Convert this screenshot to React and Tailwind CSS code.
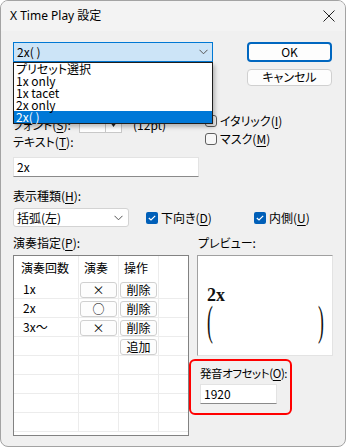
import React from 'react';

const jp = "[font-family:'Noto_Sans_CJK_JP','Noto_Sans',sans-serif]";

function U({ children }) {
    return <span className="underline underline-offset-[2px] decoration-[1px]">{children}</span>;
}

function Chevron() {
    return (
        <svg width="9" height="6" viewBox="0 0 9 6" className="shrink-0">
            <path d="M0.5 0.8 L4.5 4.8 L8.5 0.8" fill="none" stroke="#555" strokeWidth="1" />
        </svg>
    );
}

function Check({ checked, label }) {
    return (
        <div className="flex items-center h-[18px]">
            {checked ? (
                <div className="w-[12px] h-[12px] rounded-[2px] bg-[#005fb8] flex items-center justify-center">
                    <svg width="8" height="6" viewBox="0 0 8 6">
                        <path d="M0.8 3 L3 5 L7.2 0.8" fill="none" stroke="white" strokeWidth="1.2" />
                    </svg>
                </div>
            ) : (
                <div className="w-[12px] h-[12px] rounded-[3px] border border-[#5f5f5f] bg-[#f7f7f7]" />
            )}
            <span className="ml-[3px] leading-[14px] whitespace-nowrap">{label}</span>
        </div>
    );
}

function SmallBtn({ children }) {
    return (
        <div className="w-[37px] h-[16px] border border-[#d0d0d0] rounded-[3px] bg-[#fdfdfd] flex items-center justify-center leading-[14px]">
            {children}
        </div>
    );
}

const rows = [
    { n: '1x', play: '×' },
    { n: '2x', play: '○' },
    { n: '3x〜', play: '×' },
    { add: true },
    {}, {}, {}, {},
];

export default function App() {
    return (
        <div className={`w-[347px] h-[448px] bg-white text-[12px] text-black ${jp} [font-feature-settings:'palt']`}>
            <div className="w-[346px] h-[447px] border border-[#a3a3a3] rounded-[8px] bg-[#f0f0f0] overflow-hidden flex flex-col">
                {/* title bar */}
                <div className="h-[30px] shrink-0 bg-[#f3f3f3] flex items-center pl-[9px] pr-[10px]">
                    <span className="flex-1 [font-family:'Noto_Sans','Noto_Sans_CJK_JP',sans-serif] text-[12px] leading-[14px]">X Time Play 設定</span>
                    <svg width="12" height="12" viewBox="0 0 12 12">
                        <path d="M0.5 0.5 L11.5 11.5 M11.5 0.5 L0.5 11.5" stroke="#222" strokeWidth="1" />
                    </svg>
                </div>

                <div className="flex-1 pl-[12px] pt-[11px]">
                    {/* preset combo + buttons */}
                    <div className="flex h-[44px]">
                        <div className="relative w-[200px] h-[20px]">
                            <div className="h-full border border-[#0078d4] bg-[#cce4f7] flex items-center pl-[3px] pr-[4px]">
                                <span className="flex-1 leading-[14px]">2x( )</span>
                                <Chevron />
                            </div>
                            <div className="absolute left-0 top-[20px] w-[200px] border border-[#1e1e1e] bg-white z-10 shadow-[2px_3px_4px_rgba(0,0,0,0.25)]">
                                {['プリセット選択', '1x only', '1x tacet', '2x only'].map(t => (
                                    <div key={t} className="h-[12px] leading-[12px] pl-[2px]">{t}</div>
                                ))}
                                <div className="h-[12px] leading-[12px] pl-[2px] bg-[#0078d7] text-white">2x( )</div>
                            </div>
                        </div>
                        <div className="ml-[34px] flex flex-col">
                            <div className="w-[85px] h-[20px] border-2 border-[#0067c0] rounded-[4px] bg-[#fdfdfd] flex items-center justify-center leading-[14px]">OK</div>
                            <div className="mt-[7px] w-[85px] h-[18px] border border-[#d0d0d0] rounded-[4px] bg-[#fdfdfd] flex items-center justify-center leading-[14px]">キャンセル</div>
                        </div>
                    </div>

                    {/* font row / checkboxes */}
                    <div className="flex mt-[26px] h-[38px]">
                        <div className="w-[192px] flex flex-col">
                            <div className="h-[21px] flex items-end">
                                <span className="w-[66px] leading-[14px] pb-[1px]">フォント(<U>S</U>):</span>
                                <div className="w-[43px] h-[17px] bg-white border border-[#c8c8c8] flex justify-end">
                                    <div className="w-[16px] h-full border-l border-[#c8c8c8] flex items-center justify-center">
                                        <svg width="7" height="5" viewBox="0 0 7 5"><path d="M0 0 L7 0 L3.5 5 Z" fill="#222" /></svg>
                                    </div>
                                </div>
                                <span className="ml-[11px] leading-[14px] pb-[1px]">(12pt)</span>
                            </div>
                            <div className="h-[17px] flex items-end">
                                <span className="leading-[14px] pb-[1px]">テキスト(<U>T</U>):</span>
                            </div>
                        </div>
                        <div className="flex flex-col">
                            <Check label={<>イタリック(<U>I</U>)</>} />
                            <Check label={<>マスク(<U>M</U>)</>} />
                        </div>
                    </div>

                    {/* text input */}
                    <div className="mt-[7px] w-[186px] h-[20px] bg-white border border-[#e3e3e3] border-b-[#8a8a8a] flex items-center pl-[3px] leading-[14px]">2x</div>

                    {/* display kind */}
                    <div className="mt-[10px] h-[17px] flex items-center leading-[14px]">表示種類(<U>H</U>):</div>
                    <div className="mt-[4px] flex items-center h-[19px]">
                        <div className="w-[116px] h-[19px] bg-white border border-[#d3d3d3] rounded-[3px] flex items-center pl-[3px] pr-[5px]">
                            <span className="flex-1 leading-[14px]">括弧(左)</span>
                            <Chevron />
                        </div>
                        <div className="ml-[17px] w-[108px]"><Check checked label={<>下向き(<U>D</U>)</>} /></div>
                        <Check checked label={<>内側(<U>U</U>)</>} />
                    </div>

                    {/* labels */}
                    <div className="mt-[7px] h-[17px] flex items-center leading-[14px]">
                        <span className="w-[185px]">演奏指定(<U>P</U>):</span>
                        <span>プレビュー:</span>
                    </div>

                    <div className="mt-[4px] flex">
                        {/* table */}
                        <div className="w-[176px] h-[181px] border border-[#828282] bg-white overflow-hidden">
                            <div className="flex h-[24px] leading-[14px]">
                                <div className="w-[65px] border-r border-[#ececec] pl-[7px] flex items-center">演奏回数</div>
                                <div className="w-[40px] border-r border-[#ececec] pl-[5px] flex items-center">演奏</div>
                                <div className="w-[40px] border-r border-[#ececec] pl-[5px] flex items-center">操作</div>
                                <div className="flex-1" />
                            </div>
                            {rows.map((r, i) => (
                                <div key={i} className="flex h-[19px] border-b border-[#ececec] leading-[14px]">
                                    <div className="w-[65px] border-r border-[#ececec] pl-[9px] flex items-center">{r.n}</div>
                                    <div className="w-[40px] border-r border-[#ececec] pl-[1px] pt-[2px]">
                                        {r.play && <SmallBtn>{r.play}</SmallBtn>}
                                    </div>
                                    <div className="w-[40px] border-r border-[#ececec] pl-[1px] pt-[2px]">
                                        {r.n && <SmallBtn>削除</SmallBtn>}
                                        {r.add && <SmallBtn>追加</SmallBtn>}
                                    </div>
                                    <div className="flex-1" />
                                </div>
                            ))}
                        </div>

                        {/* preview + offset */}
                        <div className="ml-[8px] flex flex-col">
                            <div className="w-[136px] h-[101px] bg-white border border-[#a0a0a0] border-r-[#e3e3e3] border-b-[#e3e3e3] flex flex-col pl-[9px] pr-[8px] [font-family:'Liberation_Serif',serif] text-[#111]">
                                <div className="mt-[30px] text-[18px] leading-[18px] font-bold">2x</div>
                                <div className="flex justify-between text-[42px] leading-[42px] -mt-[4px]">
                                    <span className="inline-block scale-x-[0.42] origin-left">(</span>
                                    <span className="inline-block scale-x-[0.42] origin-right">)</span>
                                </div>
                            </div>
                            <div className="-ml-[8px] mt-[3px] w-[103px] h-[56px] border-2 border-[#ff0000] rounded-[6px] pl-[9px] pt-[5px]">
                                <div className="h-[14px] leading-[14px] whitespace-nowrap text-[11.5px] tracking-[-0.4px]">発音オフセット(<U>O</U>):</div>
                                <div className="mt-[4px] w-[77px] h-[20px] bg-white border border-[#e3e3e3] border-b-[#8a8a8a] flex items-center pl-[3px] leading-[14px]">1920</div>
                            </div>
                        </div>
                    </div>
                </div>
            </div>
        </div>
    );
}
